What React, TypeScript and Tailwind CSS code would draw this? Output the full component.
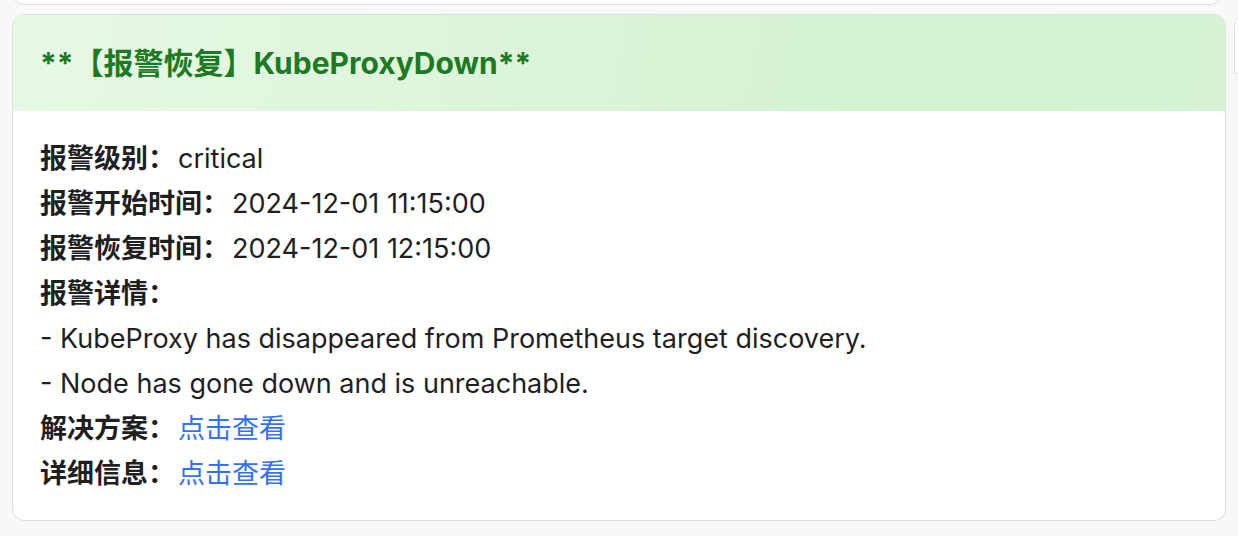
const font = { fontFamily: '"Inter", "Noto Sans CJK SC", sans-serif' };

const rows: { label: string; value?: string }[] = [
  { label: "报警级别", value: "critical" },
  { label: "报警开始时间", value: "2024-12-01 11:15:00" },
  { label: "报警恢复时间", value: "2024-12-01 12:15:00" },
  { label: "报警详情" },
];

const App = () => {
  return (
    <div className="h-[536px] w-[1238px] overflow-hidden bg-[#f8f8f9]" style={font}>
      <div className="relative">
        {/* previous card edge */}
        <div className="absolute left-[12px] top-[-20px] h-[25px] w-[1210px] rounded-b-[12px] border border-[#dedee3] bg-white" />
        {/* next card edge */}
        <div className="absolute left-[1234px] top-[14px] h-[60px] w-[40px] rounded-tl-[12px] border border-[#dedee3] bg-white" />
      </div>
      <div className="pl-[12px] pt-[14px]">
        <div className="w-[1214px] overflow-hidden rounded-[12px] border border-[#dedee3] bg-white">
          <div className="flex h-[96px] items-center bg-[linear-gradient(100deg,#e8f8e6_0%,#dcf5da_40%,#d2f3cf_75%,#d6f4d3_100%)] px-[27px]">
            <h1 className="text-[30px] font-bold text-[#1c7a23]">**【报警恢复】KubeProxyDown**</h1>
          </div>
          <div className="px-[27px] pb-[24px] pt-[25px] text-[27px] leading-[45px] text-[#1f1f1f]">
            {rows.map((r) => (
              <div key={r.label}>
                <span className="font-semibold">{r.label}：</span>
                {r.value && <span className="ml-[3px]">{r.value}</span>}
              </div>
            ))}
            <div>- KubeProxy has disappeared from Prometheus target discovery.</div>
            <div>- Node has gone down and is unreachable.</div>
            <div>
              <span className="font-semibold">解决方案：</span>
              <a className="ml-[3px] text-[#3370ff]">点击查看</a>
            </div>
            <div>
              <span className="font-semibold">详细信息：</span>
              <a className="ml-[3px] text-[#3370ff]">点击查看</a>
            </div>
          </div>
        </div>
      </div>
    </div>
  );
};

export default App;
